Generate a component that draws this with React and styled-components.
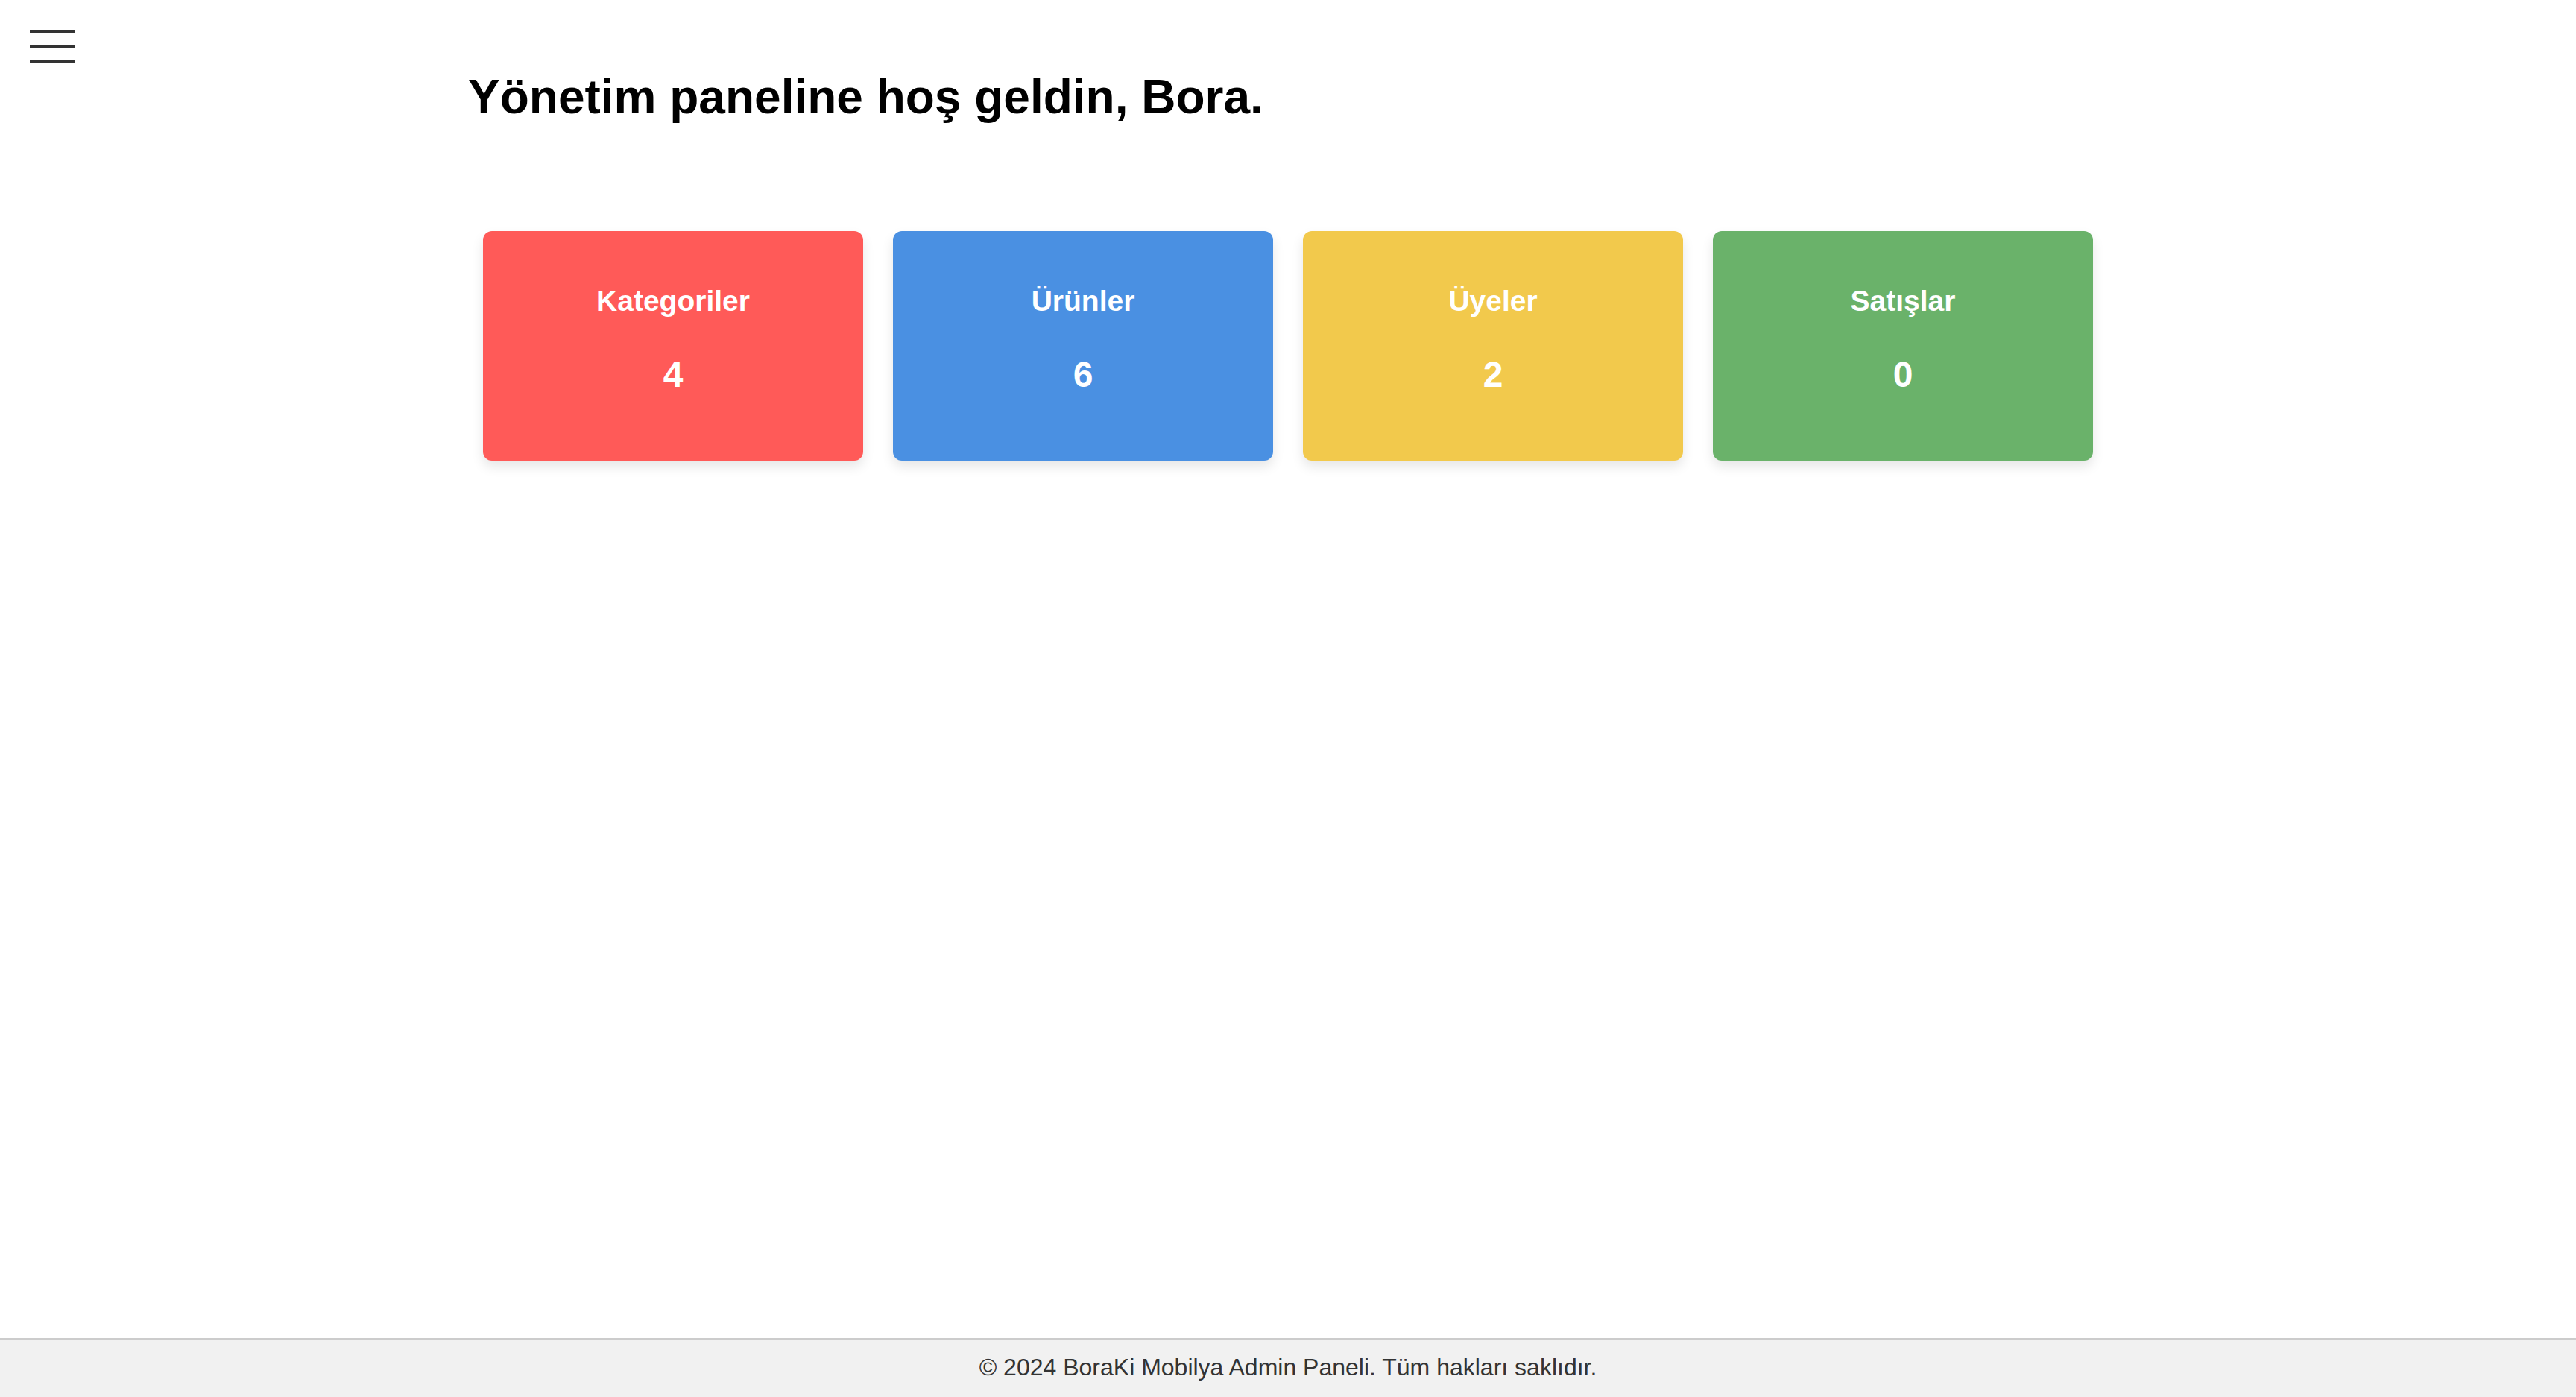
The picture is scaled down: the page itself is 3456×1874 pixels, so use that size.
import React from "react";
import styled, { createGlobalStyle } from "styled-components";

const GlobalStyle = createGlobalStyle`
  html, body {
    margin: 0;
    padding: 0;
    background: #ffffff;
    font-family: "Liberation Sans", Arial, Helvetica, sans-serif;
  }
  * { box-sizing: border-box; }
`;

const Page = styled.div`
  min-height: 100vh;
  display: flex;
  flex-direction: column;
`;

const MenuToggle = styled.button`
  position: fixed;
  top: 40px;
  left: 40px;
  width: 60px;
  height: 44px;
  padding: 0;
  border: 0;
  background: transparent;
  display: flex;
  flex-direction: column;
  justify-content: space-between;
  cursor: pointer;
`;

const Bar = styled.span`
  display: block;
  width: 60px;
  height: 4px;
  background: #333333;
`;

const Main = styled.main`
  flex: 1;
  width: 2200px;
  margin: 0 auto;
  padding-top: 93px;
`;

const Title = styled.h1`
  margin: 0 0 143px;
  font-size: 64px;
  line-height: 74px;
  font-weight: 700;
  color: #000000;
`;

const CardRow = styled.div`
  display: flex;
  gap: 40px;
  padding: 0 20px;
`;

const Card = styled.div`
  width: 510px;
  height: 308px;
  border-radius: 12px;
  background: ${(p) => p.$color};
  box-shadow: 0 8px 16px rgba(0, 0, 0, 0.1);
  display: flex;
  flex-direction: column;
  align-items: center;
  color: #ffffff;
`;

const CardTitle = styled.h3`
  margin: 72px 0 0;
  font-size: 39px;
  line-height: 44px;
  font-weight: 700;
`;

const CardValue = styled.p`
  margin: 50px 0 0;
  font-size: 48px;
  line-height: 54px;
  font-weight: 700;
`;

const Footer = styled.footer`
  background: #f1f1f1;
  border-top: 2px solid #cccccc;
  padding: 19px 0 21px;
  text-align: center;
  font-size: 32px;
  line-height: 37px;
  color: #333333;
`;

const stats = [
  { label: "Kategoriler", value: 4, color: "#ff5a58" },
  { label: "Ürünler", value: 6, color: "#4a90e2" },
  { label: "Üyeler", value: 2, color: "#f2c94c" },
  { label: "Satışlar", value: 0, color: "#6ab26a" },
];

export default function App() {
  return (
    <Page>
      <GlobalStyle />
      <MenuToggle aria-label="Menü">
        <Bar />
        <Bar />
        <Bar />
      </MenuToggle>
      <Main>
        <Title>Yönetim paneline hoş geldin, Bora.</Title>
        <CardRow>
          {stats.map((s) => (
            <Card key={s.label} $color={s.color}>
              <CardTitle>{s.label}</CardTitle>
              <CardValue>{s.value}</CardValue>
            </Card>
          ))}
        </CardRow>
      </Main>
      <Footer>© 2024 BoraKi Mobilya Admin Paneli. Tüm hakları saklıdır.</Footer>
    </Page>
  );
}
